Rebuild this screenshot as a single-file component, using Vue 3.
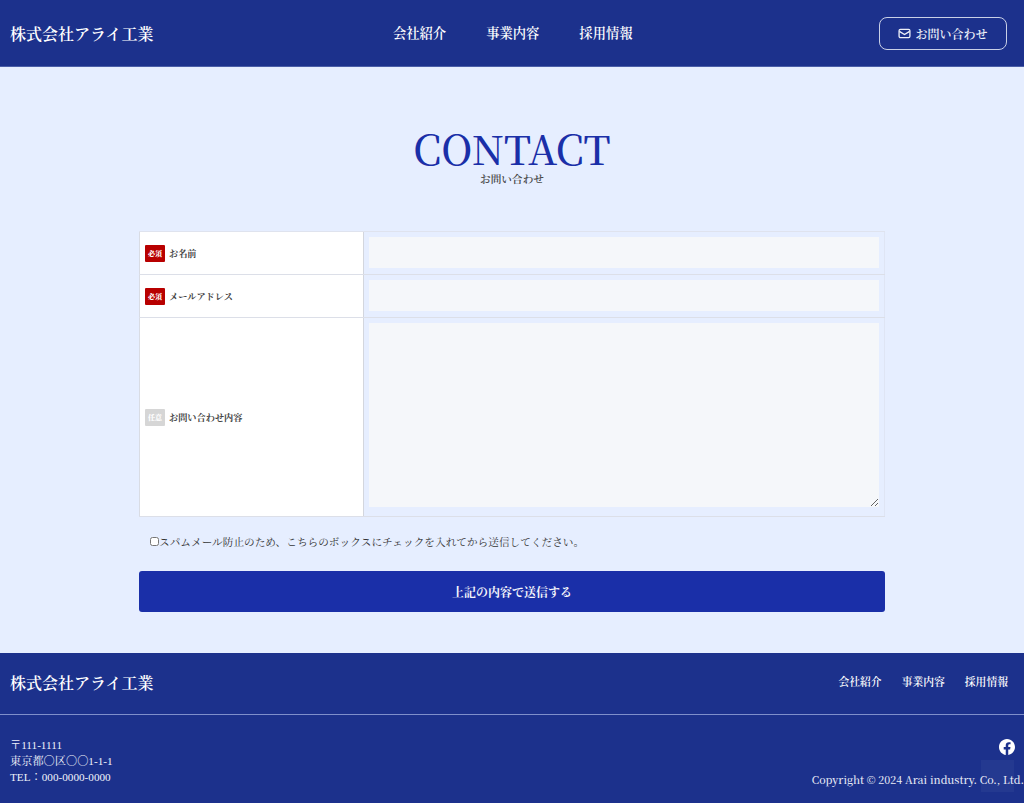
<template>
  <div class="page">
    <header class="header">
      <div class="logo">株式会社アライ工業</div>
      <nav class="nav">
        <a v-for="item in navItems" :key="item">{{ item }}</a>
      </nav>
      <a class="contact-btn">
        <svg class="mail" viewBox="0 0 24 24" fill="none" stroke="currentColor" stroke-width="2.4">
          <rect x="2" y="4.5" width="20" height="15" rx="2.5" />
          <path d="M2.5 8l9.5 6 9.500-6" />
        </svg>
        お問い合わせ
      </a>
    </header>

    <main class="main">
      <div class="title">
        <h1>CONTACT</h1>
        <p>お問い合わせ</p>
      </div>

      <form class="form" @submit.prevent>
        <div class="rows">
          <div v-for="row in rows" :key="row.label" class="row">
            <div class="label">
              <span class="badge" :class="{ optional: !row.required }">{{ row.required ? '必須' : '任意' }}</span>
              <span class="label-text">{{ row.label }}</span>
            </div>
            <div class="field">
              <textarea v-if="row.multi" class="textarea"></textarea>
              <input v-else class="input" type="text" />
            </div>
          </div>
        </div>

        <label class="spam">
          <input type="checkbox" class="check" />スパムメール防止のため、こちらのボックスにチェックを入れてから送信してください。
        </label>

        <button class="submit" type="submit">上記の内容で送信する</button>
      </form>
    </main>

    <footer class="footer">
      <div class="footer-top">
        <div class="logo">株式会社アライ工業</div>
        <nav class="footer-nav">
          <a v-for="item in navItems" :key="item">{{ item }}</a>
        </nav>
      </div>
      <div class="footer-bottom">
        <div class="address">
          <p>〒111-1111</p>
          <p>東京都〇区〇〇1-1-1</p>
          <p>TEL：000-0000-0000</p>
        </div>
        <div class="footer-right">
          <svg class="fb" viewBox="0 0 16 16" fill="currentColor">
            <path d="M16 8.049c0-4.446-3.582-8.05-8-8.05C3.580 0-.002 3.603-.002 8.050c0 4.017 2.926 7.347 6.750 7.951v-5.625h-2.030V8.049h2.030V6.275c0-2.017 1.195-3.131 3.022-3.131.876 0 1.791.157 1.791.157v1.980h-1.009c-.993 0-1.303.621-1.303 1.258v1.510h2.218l-.354 2.326H9.250V16c3.824-.604 6.750-3.934 6.750-7.951" />
          </svg>
          <p class="copy">Copyright © 2024 Arai industry. Co., Ltd.</p>
        </div>
      </div>
      <div class="to-top"></div>
    </footer>
  </div>
</template>

<script setup>
const navItems = ['会社紹介', '事業内容', '採用情報']

const rows = [
  { label: 'お名前', required: true },
  { label: 'メールアドレス', required: true },
  { label: 'お問い合わせ内容', required: false, multi: true }
]
</script>

<style>
body {
  margin: 0;
}
</style>

<style scoped>
.page {
  font-family: "Noto Serif CJK JP", "Liberation Serif", "Noto Sans CJK JP", serif;
  color: #333;
}

p {
  margin: 0;
}

.header {
  display: flex;
  align-items: center;
  justify-content: space-between;
  height: 66px;
  padding: 0 17px 0 10px;
  background: #1c318c;
  border-bottom: 1px solid #4a5ea8;
}

.logo {
  color: #fff;
  font-size: 16px;
  font-weight: 600;
}

.nav {
  display: flex;
  gap: 40px;
  margin-right: 7px;
}

.nav a {
  color: #fff;
  font-size: 13.3px;
  font-weight: 600;
  line-height: 20px;
}

.contact-btn {
  display: flex;
  align-items: center;
  justify-content: center;
  gap: 4px;
  width: 126px;
  height: 31px;
  border: 1.5px solid #c9d0e6;
  border-radius: 8px;
  color: #eef0f8;
  font-size: 12px;
  font-weight: 600;
}

.mail {
  width: 13px;
  height: 13px;
}

.main {
  background: #e6eeff;
  height: 586px;
  padding-top: 60px;
  box-sizing: border-box;
}

.title {
  text-align: center;
  height: 104px;
}

.title h1 {
  margin: 0;
  color: #1a2fa8;
  font-size: 40.3px;
  font-weight: 500;
  line-height: 42px;
}

.title p {
  font-size: 10.67px;
  font-weight: 600;
  line-height: 14px;
  margin-top: 3px;
  color: #444;
}

.form {
  width: 746px;
  margin: 0 auto;
}

.rows {
  border-top: 1px solid #dfe3ee;
}

.row {
  display: grid;
  grid-template-columns: 225px 1fr;
  border-bottom: 1px solid #dcdfe8;
}

.label {
  display: flex;
  align-items: center;
  gap: 4px;
  padding-left: 5px;
  background: #fff;
  border-left: 1px solid #d9dce4;
  border-right: 1px solid #d3d6de;
  box-sizing: border-box;
}

.badge {
  display: flex;
  align-items: center;
  justify-content: center;
  width: 20px;
  height: 17px;
  background: #b80000;
  border-radius: 1px;
  color: #fff;
  font-size: 7px;
  font-weight: 800;
}

.badge.optional {
  background: #d6d6d6;
}

.label-text {
  font-size: 9.2px;
  font-weight: 700;
  color: #444;
}

.field {
  padding: 5px;
  display: flex;
  border-right: 1px solid #dfe5f4;
}

.input,
.textarea {
  display: block;
  width: 100%;
  border: 0;
  margin: 0;
  padding: 0;
  background: #f5f7fa;
  box-sizing: border-box;
}

.input {
  height: 31px;
  margin-bottom: 1px;
}

.textarea {
  height: 184px;
  margin-bottom: 4px;
  resize: vertical;
}

.spam {
  display: flex;
  align-items: center;
  height: 16px;
  margin: 16px 0 22px 11px;
  font-size: 10.67px;
  color: #333;
}

.check {
  width: 9px;
  height: 9px;
  margin: 0;
}

.submit {
  display: block;
  width: 100%;
  height: 41px;
  background: #1a2fa8;
  border: 0;
  border-radius: 3px;
  color: #f4f5fb;
  font-family: inherit;
  font-size: 12px;
  font-weight: 700;
}

.footer {
  background: #1c318c;
  height: 150px;
  position: relative;
  color: #fff;
}

.footer-top {
  display: flex;
  align-items: center;
  justify-content: space-between;
  height: 59px;
  padding: 0 16px 2px 10px;
  border-bottom: 1px solid #7f8fcb;
}

.footer-nav {
  display: flex;
  gap: 20px;
  margin-bottom: 2px;
}

.footer-nav a {
  font-size: 10.8px;
  font-weight: 600;
}

.footer-bottom {
  display: flex;
  justify-content: space-between;
  padding: 22px 0 0 10px;
}

.address {
  font-family: "Liberation Serif", "Noto Serif CJK JP", serif;
  font-size: 11.2px;
  line-height: 16px;
  color: #f0f2fa;
}

.footer-right {
  display: flex;
  flex-direction: column;
  align-items: flex-end;
}

.fb {
  width: 16px;
  height: 16px;
  margin-top: 2px;
  margin-right: 9px;
}

.copy {
  font-size: 10.67px;
  font-weight: 500;
  margin-top: 17px;
  line-height: 16px;
  color: #e8ebf6;
}

.to-top {
  position: absolute;
  right: 10px;
  bottom: 11px;
  width: 33px;
  height: 32px;
  background: rgba(255, 255, 255, 0.04);
}
</style>
